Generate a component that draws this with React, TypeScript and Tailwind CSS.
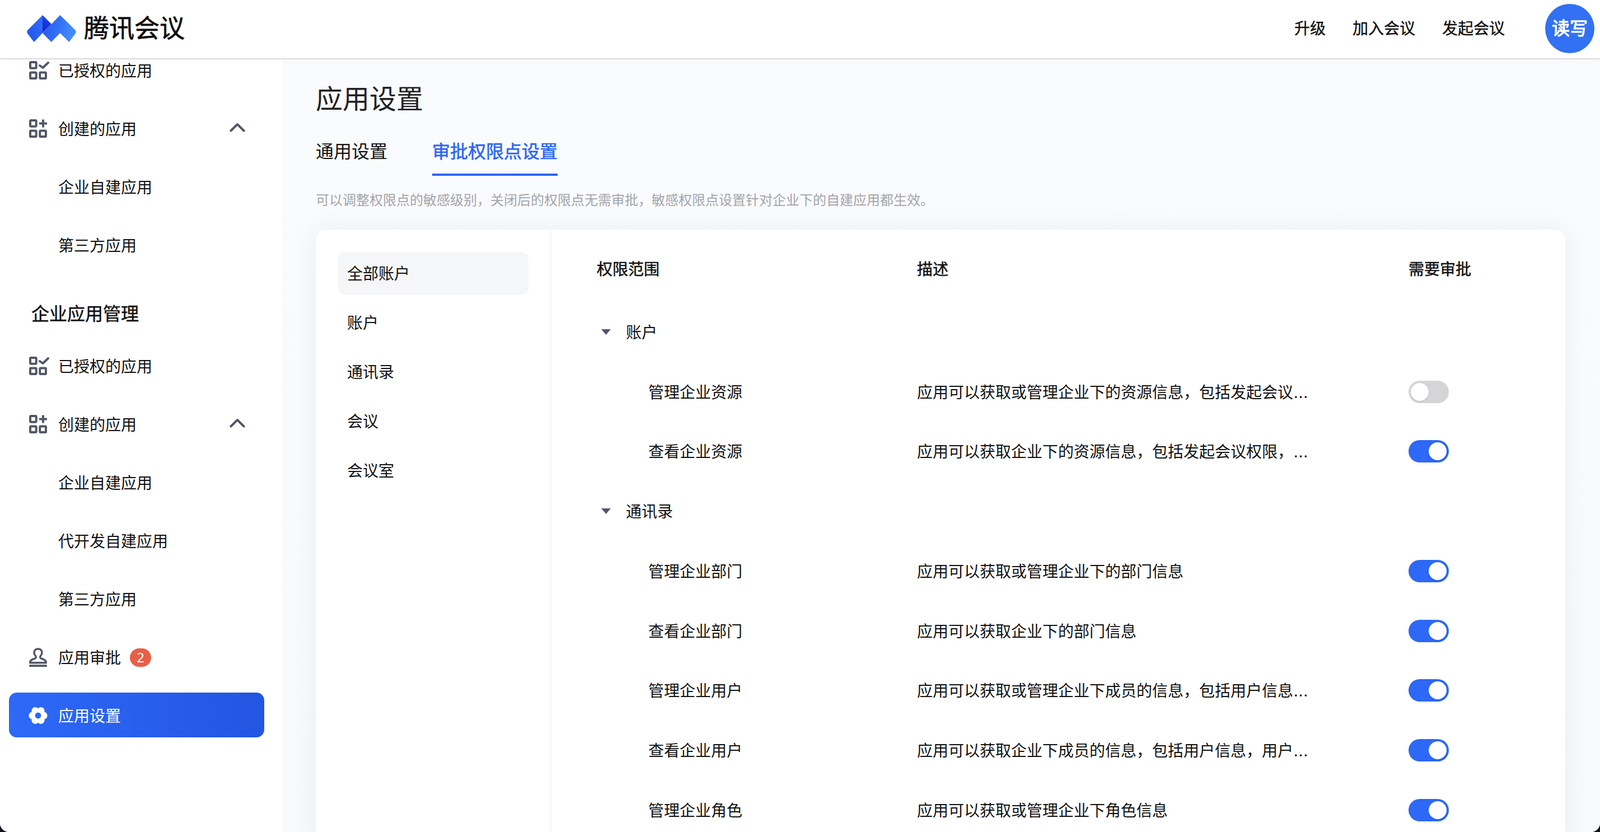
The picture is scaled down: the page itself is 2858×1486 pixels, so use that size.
import React from "react";

const Grid = ({ kind }: { kind: "check" | "plus" }) => (
  <svg width="36" height="34" viewBox="0 0 36 34" fill="none" stroke="#525766" strokeWidth="4" className="shrink-0">
    <rect x="2" y="2" width="10.7" height="10.7" rx="1.4" />
    <rect x="2" y="20.4" width="10.7" height="10.7" rx="1.4" />
    <rect x="19.3" y="20.4" width="10.7" height="10.7" rx="1.4" />
    {kind === "check" ? (
      <path d="M19 8 L24.5 12 L34 3" strokeLinecap="round" strokeLinejoin="round" />
    ) : (
      <path d="M18 7.6 H32 M25 0.6 V14.6" />
    )}
  </svg>
);

const Chevron = () => (
  <svg width="28" height="17" viewBox="0 0 28 17" fill="none" stroke="#525766" strokeWidth="4" strokeLinecap="round" strokeLinejoin="round">
    <path d="M2.4 14.5 L14 3 L25.6 14.5" />
  </svg>
);

const Stamp = () => (
  <svg width="36" height="35" viewBox="0 0 36 35" fill="none" className="shrink-0">
    <path
      d="M11.6 14.5 C6.5 9 9.5 2 16 2 C22.5 2 25.5 9 20.4 14.5 C18.6 17.5 20.5 19 24 20 C29 21.5 30.4 23.5 30.4 26.8 H1.6 C1.6 23.5 3 21.5 8 20 C11.5 19 13.4 17.5 11.6 14.5 Z"
      stroke="#525766"
      strokeWidth="3.4"
      strokeLinejoin="round"
    />
    <rect x="0" y="30.2" width="32" height="3.8" rx="1.2" fill="#525766" />
  </svg>
);

const Gear = () => {
  const pts = [0, 60, 120, 180, 240, 300].map((a) => {
    const r = (a * Math.PI) / 180;
    return [17 + 10 * Math.cos(r), 16 + 9.6 * Math.sin(r)];
  });
  return (
    <svg width="36" height="32" viewBox="0 0 36 32" className="shrink-0">
      <circle cx="17" cy="16" r="11" fill="#fff" />
      {pts.map((p, i) => (
        <circle key={i} cx={p[0]} cy={p[1]} r="6.6" fill="#fff" />
      ))}
      <circle cx="17" cy="16" r="5.4" fill="#2c66f6" />
    </svg>
  );
};

const Logo = () => (
  <svg width="88" height="48" viewBox="0 0 88 48" className="shrink-0">
    <defs>
      <linearGradient id="lg1" x1="0" y1="1" x2="1" y2="0.3">
        <stop offset="0" stopColor="#2450ee" />
        <stop offset="1" stopColor="#2f6cf6" />
      </linearGradient>
      <linearGradient id="lg2" x1="0" y1="0.5" x2="1" y2="0.7">
        <stop offset="0" stopColor="#2459ee" />
        <stop offset="1" stopColor="#4691fb" />
      </linearGradient>
      <linearGradient id="lg3" x1="0.4" y1="0" x2="0" y2="1">
        <stop offset="0" stopColor="#1f48ee" />
        <stop offset="1" stopColor="#0c1fc8" />
      </linearGradient>
    </defs>
    <path d="M28 0 L1.6 26.6 Q-1 30 1.6 33.4 L12.7 48 L28 32 Z" fill="url(#lg1)" />
    <path d="M59.3 0 L86.4 26.6 Q89 30 86.4 33.4 L75.3 48 L59.3 32 L43.7 48 L28 32 L44 16 Z" fill="url(#lg2)" />
    <path d="M28 0 L44 16 L28 31.5 Z" fill="url(#lg3)" />
  </svg>
);

const Toggle = ({ on = true }: { on?: boolean }) => (
  <div className={`relative h-10 w-[72px] rounded-full ${on ? "bg-[#2d68f6]" : "bg-[#d4d5d7]"}`}>
    <div className={`absolute top-1 h-8 w-8 rounded-full bg-white shadow-[0_1px_3px_rgba(0,0,0,0.12)] ${on ? "left-9" : "left-1"}`} />
  </div>
);

const Side = ({ icon, text, extra, sub }: { icon?: React.ReactNode; text: string; extra?: React.ReactNode; sub?: boolean }) => (
  <div className="relative flex h-[104px] items-center pl-[52px] pt-[2px] text-[28px] text-[#111]">
    <div className="flex w-[52px] items-center">{icon}</div>
    <span>{text}</span>
    {extra}
    {sub && (
      <div className="absolute left-[410px] top-[42px]">
        <Chevron />
      </div>
    )}
  </div>
);

const Perm = ({ name, desc, more, on = true }: { name: string; desc: string; more?: boolean; on?: boolean }) => (
  <div className="flex h-[106.75px] items-center pt-[2px] text-[28px] text-[#111]">
    <div className="w-[572px] pl-[92px]">{name}</div>
    <div className="w-[878px] whitespace-nowrap">
      {desc}
      {more ? <span className="ml-[1px] tracking-[1.3px]">...</span> : null}
    </div>
    <Toggle on={on} />
  </div>
);

const Section = ({ name }: { name: string }) => (
  <div className="flex h-[106.75px] items-center pt-[2px] text-[28px] text-[#111]">
    <svg width="17" height="10" viewBox="0 0 17 10" className="ml-2 shrink-0">
      <path d="M0 0 H17 L8.5 10 Z" fill="#53576a" />
    </svg>
    <span className="ml-[27px]">{name}</span>
  </div>
);

export default function App() {
  return (
    <div lang="zh-CN" className="h-[1486px] w-[2858px] overflow-hidden bg-[#14121f] font-['Liberation_Sans','Noto_Sans_CJK_SC',sans-serif]">
      <div className="flex h-full w-full flex-col overflow-hidden rounded-b-[16px] bg-white">
        <header className="relative z-10 flex h-[106px] shrink-0 items-center border-b-2 border-[#dcdcdc] bg-white pl-[48px] pb-[2px] shadow-[0_4px_12px_rgba(0,0,0,0.02)]">
          <Logo />
          <span className="mb-[2px] ml-[14px] text-[45px] leading-[56px] text-[#0c0c0c] [-webkit-text-stroke:0.6px_#0c0c0c]">腾讯会议</span>
          <div className="ml-auto flex items-center text-[28px] text-[#111]">
            <span className="mb-[3px] [-webkit-text-stroke:0.4px_#111]">升级</span>
            <span className="mb-[3px] ml-[48px] [-webkit-text-stroke:0.4px_#111]">加入会议</span>
            <span className="mb-[3px] ml-[48px] [-webkit-text-stroke:0.4px_#111]">发起会议</span>
            <div className="ml-[72px] mr-[10px] flex h-[88px] w-[88px] items-center justify-center rounded-full bg-[#3271f3] pb-[3px] text-[32px] font-bold text-white">
              读写
            </div>
          </div>
        </header>
        <div className="flex min-h-0 flex-1">
          <aside className="w-[504px] shrink-0 bg-white">
            <div className="mt-[-33px]">
              <Side icon={<Grid kind="check" />} text="已授权的应用" />
              <Side icon={<Grid kind="plus" />} text="创建的应用" sub />
              <Side text="企业自建应用" />
              <Side text="第三方应用" />
              <div className="flex h-[112px] items-center pl-[56px] pt-[29px] text-[32px] text-[#111] [-webkit-text-stroke:0.5px_#111]">企业应用管理</div>
              <Side icon={<Grid kind="check" />} text="已授权的应用" />
              <Side icon={<Grid kind="plus" />} text="创建的应用" sub />
              <Side text="企业自建应用" />
              <Side text="代开发自建应用" />
              <Side text="第三方应用" />
              <Side
                icon={<Stamp />}
                text="应用审批"
                extra={
                  <div className="ml-4 flex h-[33px] w-[38px] items-center justify-center rounded-full bg-[#e85f45] text-[24px] text-white">
                    2
                  </div>
                }
              />
              <div className="mx-4 my-3 flex h-20 w-[456px] items-center rounded-[14px] bg-gradient-to-r from-[#2e69f8] to-[#2355e1] pl-[35px] pt-[1px] text-[28px] text-white">
                <div className="flex w-[53px] items-center">
                  <Gear />
                </div>
                <span>应用设置</span>
              </div>
            </div>
          </aside>
          <main className="min-w-0 flex-1 bg-gradient-to-b from-[#fafbfd] to-[#f8f9fb] pl-[60px]">
            <h1 className="mt-[38px] text-[48px] font-normal leading-[64px] text-[#222]">应用设置</h1>
            <div className="mt-[40px] flex text-[32px] leading-[44px]">
              <div className="text-[#111]">通用设置</div>
              <div className="ml-[80px] border-b-4 border-[#2b66f6] pb-[18px] text-[#2b66f6] [-webkit-text-stroke:0.6px_#2b66f6]">审批权限点设置</div>
            </div>
            <p className="mt-[25px] text-[24px] leading-[36px] text-[#a2a5aa]">
              可以调整权限点的敏感级别，关闭后的权限点无需审批，敏感权限点设置针对企业下的自建应用都生效。
            </p>
            <div className="mt-[35px] flex h-[1100px] w-[2232px] rounded-[18px] bg-white shadow-[0_0_40px_rgba(50,60,90,0.07)]">
              <div className="w-[421px] shrink-0 border-r-2 border-[#f5f5f9] pl-[40px] pt-[40px] text-[28px] text-[#111]">
                <div className="flex h-[76px] w-[340px] items-center rounded-[12px] bg-[#f5f6f8] pb-[1px] pl-[16px]">全部账户</div>
                <div className="mt-[12px] flex h-[76px] items-center pb-[1px] pl-[16px]">账户</div>
                <div className="mt-[12px] flex h-[76px] items-center pb-[1px] pl-[16px]">通讯录</div>
                <div className="mt-[12px] flex h-[76px] items-center pb-[1px] pl-[16px]">会议</div>
                <div className="mt-[12px] flex h-[76px] items-center pb-[1px] pl-[16px]">会议室</div>
              </div>
              <div className="flex-1 pl-[81px] pt-[17px]">
                <div className="flex h-[106px] items-center pb-[1px] text-[28px] text-[#111] [-webkit-text-stroke:0.5px_#111]">
                  <div className="w-[572px]">权限范围</div>
                  <div className="w-[878px]">描述</div>
                  <div>需要审批</div>
                </div>
                <div className="h-[5.6px]" />
                <Section name="账户" />
                <Perm on={false} more name="管理企业资源" desc="应用可以获取或管理企业下的资源信息，包括发起会议" />
                <Perm more name="查看企业资源" desc="应用可以获取企业下的资源信息，包括发起会议权限，" />
                <Section name="通讯录" />
                <Perm name="管理企业部门" desc="应用可以获取或管理企业下的部门信息" />
                <Perm name="查看企业部门" desc="应用可以获取企业下的部门信息" />
                <Perm more name="管理企业用户" desc="应用可以获取或管理企业下成员的信息，包括用户信息" />
                <Perm more name="查看企业用户" desc="应用可以获取企业下成员的信息，包括用户信息，用户" />
                <Perm name="管理企业角色" desc="应用可以获取或管理企业下角色信息" />
              </div>
            </div>
          </main>
        </div>
      </div>
    </div>
  );
}
